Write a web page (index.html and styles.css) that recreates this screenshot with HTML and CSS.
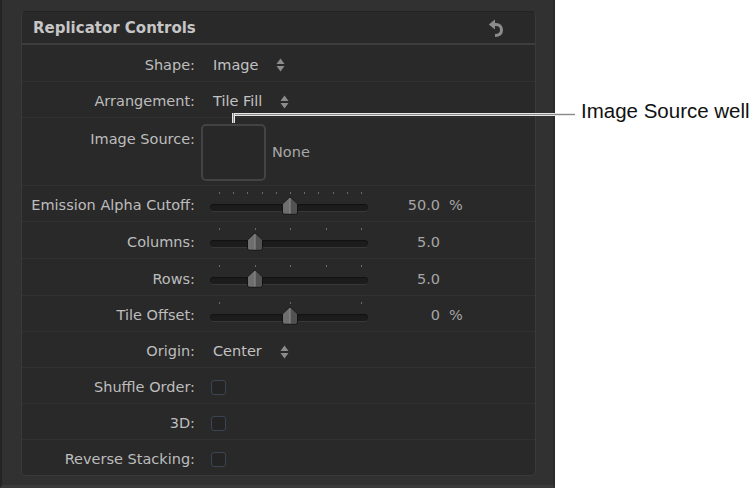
FILE: index.html
```html
<!DOCTYPE html>
<html>
<head>
<meta charset="utf-8">
<link rel="stylesheet" href="styles.css">
</head>
<body>
<div class="window">
  <section class="panel">
    <header class="panel-head">
      <h1>Replicator Controls</h1>
      <svg class="undo" width="15" height="18" viewBox="0 0 15 18"><path d="M0.8 5.5 L7 0.5 V10.5 Z" fill="#8c8c8c"/><path d="M6 5.5 H8 C11.5 5.5 13.5 8 13.5 11 C13.5 14.5 11 16.5 7 16.5" fill="none" stroke="#8c8c8c" stroke-width="3"/></svg>
    </header>

    <div class="row h37">
      <div class="label">Shape:</div>
      <div class="popup"><span>Image</span><svg class="updown" width="9" height="14" viewBox="0 0 9 14"><path d="M0.5 6 L4.5 0.5 L8.5 6 Z"/><path d="M0.5 8 L8.5 8 L4.5 13.5 Z"/></svg></div>
    </div>

    <div class="row h36">
      <div class="label">Arrangement:</div>
      <div class="popup"><span>Tile Fill</span><svg class="updown" width="9" height="14" viewBox="0 0 9 14"><path d="M0.5 6 L4.5 0.5 L8.5 6 Z"/><path d="M0.5 8 L8.5 8 L4.5 13.5 Z"/></svg></div>
    </div>

    <div class="row h68 top">
      <div class="label">Image Source:</div>
      <div class="source"><div class="well"></div><span class="none">None</span></div>
    </div>

    <div class="row h36">
      <div class="label">Emission Alpha Cutoff:</div>
      <div class="ctl">
        <div class="slider">
          <div class="ticks"><i></i><i></i><i></i><i></i><i></i><i></i><i></i><i></i><i></i><i></i><i></i></div>
          <div class="track"></div>
          <svg class="thumb" style="left:71px" width="18" height="19" viewBox="0 0 18 19"><path d="M1.5 8 L9 0.8 L16.5 8 V16 Q16.5 18 14.5 18 H3.5 Q1.5 18 1.5 16 Z" fill="#666" stroke="#131313"/><path d="M9 1.6 L16 8.2 V16 Q16 17.5 14.5 17.5 H9 Z" fill="#525252"/><path d="M9 1.6 L2 8.2 V16 Q2 17.5 3.5 17.5 H9 Z" fill="#6e6e6e"/><line x1="9" y1="2.2" x2="9" y2="17.5" stroke="#8e8e8e"/></svg>
        </div>
        <span class="num">50.0</span><span class="unit">%</span>
      </div>
    </div>

    <div class="row h37">
      <div class="label">Columns:</div>
      <div class="ctl">
        <div class="slider">
          <div class="ticks"><i></i><i></i><i></i><i></i><i></i></div>
          <div class="track"></div>
          <svg class="thumb" style="left:35.5px" width="18" height="19" viewBox="0 0 18 19"><path d="M1.5 8 L9 0.8 L16.5 8 V16 Q16.5 18 14.5 18 H3.5 Q1.5 18 1.5 16 Z" fill="#666" stroke="#131313"/><path d="M9 1.6 L16 8.2 V16 Q16 17.5 14.5 17.5 H9 Z" fill="#525252"/><path d="M9 1.6 L2 8.2 V16 Q2 17.5 3.5 17.5 H9 Z" fill="#6e6e6e"/><line x1="9" y1="2.2" x2="9" y2="17.5" stroke="#8e8e8e"/></svg>
        </div>
        <span class="num">5.0</span>
      </div>
    </div>

    <div class="row h37">
      <div class="label">Rows:</div>
      <div class="ctl">
        <div class="slider">
          <div class="ticks"><i></i><i></i><i></i><i></i><i></i></div>
          <div class="track"></div>
          <svg class="thumb" style="left:35.5px" width="18" height="19" viewBox="0 0 18 19"><path d="M1.5 8 L9 0.8 L16.5 8 V16 Q16.5 18 14.5 18 H3.5 Q1.5 18 1.5 16 Z" fill="#666" stroke="#131313"/><path d="M9 1.6 L16 8.2 V16 Q16 17.5 14.5 17.5 H9 Z" fill="#525252"/><path d="M9 1.6 L2 8.2 V16 Q2 17.5 3.5 17.5 H9 Z" fill="#6e6e6e"/><line x1="9" y1="2.2" x2="9" y2="17.5" stroke="#8e8e8e"/></svg>
        </div>
        <span class="num">5.0</span>
      </div>
    </div>

    <div class="row h36">
      <div class="label">Tile Offset:</div>
      <div class="ctl">
        <div class="slider">
          <div class="ticks"><i></i><i></i><i></i></div>
          <div class="track"></div>
          <svg class="thumb" style="left:71px" width="18" height="19" viewBox="0 0 18 19"><path d="M1.5 8 L9 0.8 L16.5 8 V16 Q16.5 18 14.5 18 H3.5 Q1.5 18 1.5 16 Z" fill="#666" stroke="#131313"/><path d="M9 1.6 L16 8.2 V16 Q16 17.5 14.5 17.5 H9 Z" fill="#525252"/><path d="M9 1.6 L2 8.2 V16 Q2 17.5 3.5 17.5 H9 Z" fill="#6e6e6e"/><line x1="9" y1="2.2" x2="9" y2="17.5" stroke="#8e8e8e"/></svg>
        </div>
        <span class="num">0</span><span class="unit">%</span>
      </div>
    </div>

    <div class="row h36">
      <div class="label">Origin:</div>
      <div class="popup"><span>Center</span><svg class="updown" width="9" height="14" viewBox="0 0 9 14"><path d="M0.5 6 L4.5 0.5 L8.5 6 Z"/><path d="M0.5 8 L8.5 8 L4.5 13.5 Z"/></svg></div>
    </div>

    <div class="row h36">
      <div class="label">Shuffle Order:</div>
      <div class="check-wrap"><span class="check"></span></div>
    </div>

    <div class="row h36">
      <div class="label">3D:</div>
      <div class="check-wrap"><span class="check"></span></div>
    </div>

    <div class="row h35">
      <div class="label">Reverse Stacking:</div>
      <div class="check-wrap"><span class="check"></span></div>
    </div>
  </section>
</div>

<div class="callout-h"></div>
<div class="callout-v"></div>
<div class="callout-text">Image Source well</div>
</body>
</html>
```

FILE: styles.css
```css
* { box-sizing: border-box; }

body {
  margin: 0;
  width: 756px;
  height: 488px;
  overflow: hidden;
  position: relative;
  background: #ffffff;
  font-family: "DejaVu Sans", sans-serif;
}

.window {
  width: 555px;
  height: 488px;
  background: #313131;
  border-left: 2px solid #242424;
  border-right: 2px solid #2a2a2a;
  border-bottom: 3px solid #3a3a3a;
  padding: 11px 0 0 19px;
}

.panel {
  width: 515px;
  height: 465px;
  background: #292929;
  border: 1px solid #3a3a3a;
  border-top-color: #232323;
  border-radius: 5px;
  display: flex;
  flex-direction: column;
}

.panel-head {
  height: 33px;
  flex: none;
  border-bottom: 2px solid #3d3d3d;
  display: flex;
  align-items: center;
  justify-content: space-between;
  padding: 0 32px 0 11px;
}

.panel-head h1 {
  margin: 0;
  font-size: 15px;
  line-height: 18px;
  font-weight: bold;
  color: #c6c6c6;
}

.undo { display: block; }

.row {
  flex: none;
  display: grid;
  grid-template-columns: 173px 1fr;
  column-gap: 15px;
  align-items: center;
  border-bottom: 1px solid #313131;
}
.row:last-child { border-bottom: 0; }

.h35 { height: 35px; }
.h36 { height: 36px; }
.h37 { height: 37px; }
.h68 { height: 68px; }

.label {
  text-align: right;
  color: #bdbdbd;
  font-size: 14.5px;
  line-height: 17px;
  padding-top: 4px;
  white-space: nowrap;
}

.row.top { align-items: start; }
.row.top .label { padding-top: 13px; }

.popup {
  display: flex;
  align-items: center;
  padding-left: 3px;
  padding-top: 4px;
  color: #c2c2c2;
  font-size: 14.5px;
  line-height: 17px;
}
.updown {
  margin-left: 18px;
  fill: #8c8c8c;
  display: block;
}

.source {
  display: flex;
  align-items: center;
  margin-left: -9px;
  margin-top: 6px;
}
.well {
  width: 65px;
  height: 57px;
  border: 2px solid #434343;
  border-radius: 5px;
  background: #282828;
}
.none {
  margin-left: 6px;
  color: #a8a8a8;
  font-size: 14.5px;
  line-height: 17px;
}

.ctl {
  display: flex;
  align-items: center;
  align-self: stretch;
}

.slider {
  position: relative;
  width: 158px;
  align-self: stretch;
  padding-top: 6px;
}
.ticks {
  display: flex;
  justify-content: space-between;
  padding: 0 6px 0 9px;
  height: 2px;
  margin-bottom: 10px;
}
.ticks i {
  width: 1px;
  height: 2px;
  background: #6c6c6c;
}
.track {
  height: 7px;
  border-radius: 4px;
  background: #1c1c1c;
  box-shadow: inset 0 1px 1px #121212, 0 1px 0 #383838;
}
.thumb {
  position: absolute;
  top: 10px;
  display: block;
}

.num {
  width: 72px;
  text-align: right;
  color: #a6a6a6;
  font-size: 14.5px;
  line-height: 17px;
  padding-top: 4px;
}
.unit {
  margin-left: 9px;
  color: #a6a6a6;
  font-size: 14.5px;
  line-height: 17px;
  padding-top: 4px;
}

.check-wrap {
  display: flex;
  align-items: center;
  padding-left: 1px;
  padding-top: 4px;
}
.check {
  width: 15px;
  height: 15px;
  border: 1px solid #3a4454;
  border-radius: 3px;
  background: #242424;
}

.callout-h {
  position: absolute;
  left: 232px;
  top: 113px;
  width: 343px;
  height: 3px;
  background: linear-gradient(#e6e6e6 0 1px, #8a8a8a 1px 2px, #e6e6e6 2px 3px);
}
.callout-v {
  position: absolute;
  left: 232px;
  top: 113px;
  width: 3px;
  height: 10px;
  background: linear-gradient(90deg, #e6e6e6 0 1px, #8a8a8a 1px 2px, #e6e6e6 2px 3px);
}
.callout-text {
  position: absolute;
  left: 581px;
  top: 99px;
  font-family: "Liberation Sans", Arial, sans-serif;
  font-size: 20.5px;
  line-height: 24px;
  color: #111111;
  white-space: nowrap;
}
```
